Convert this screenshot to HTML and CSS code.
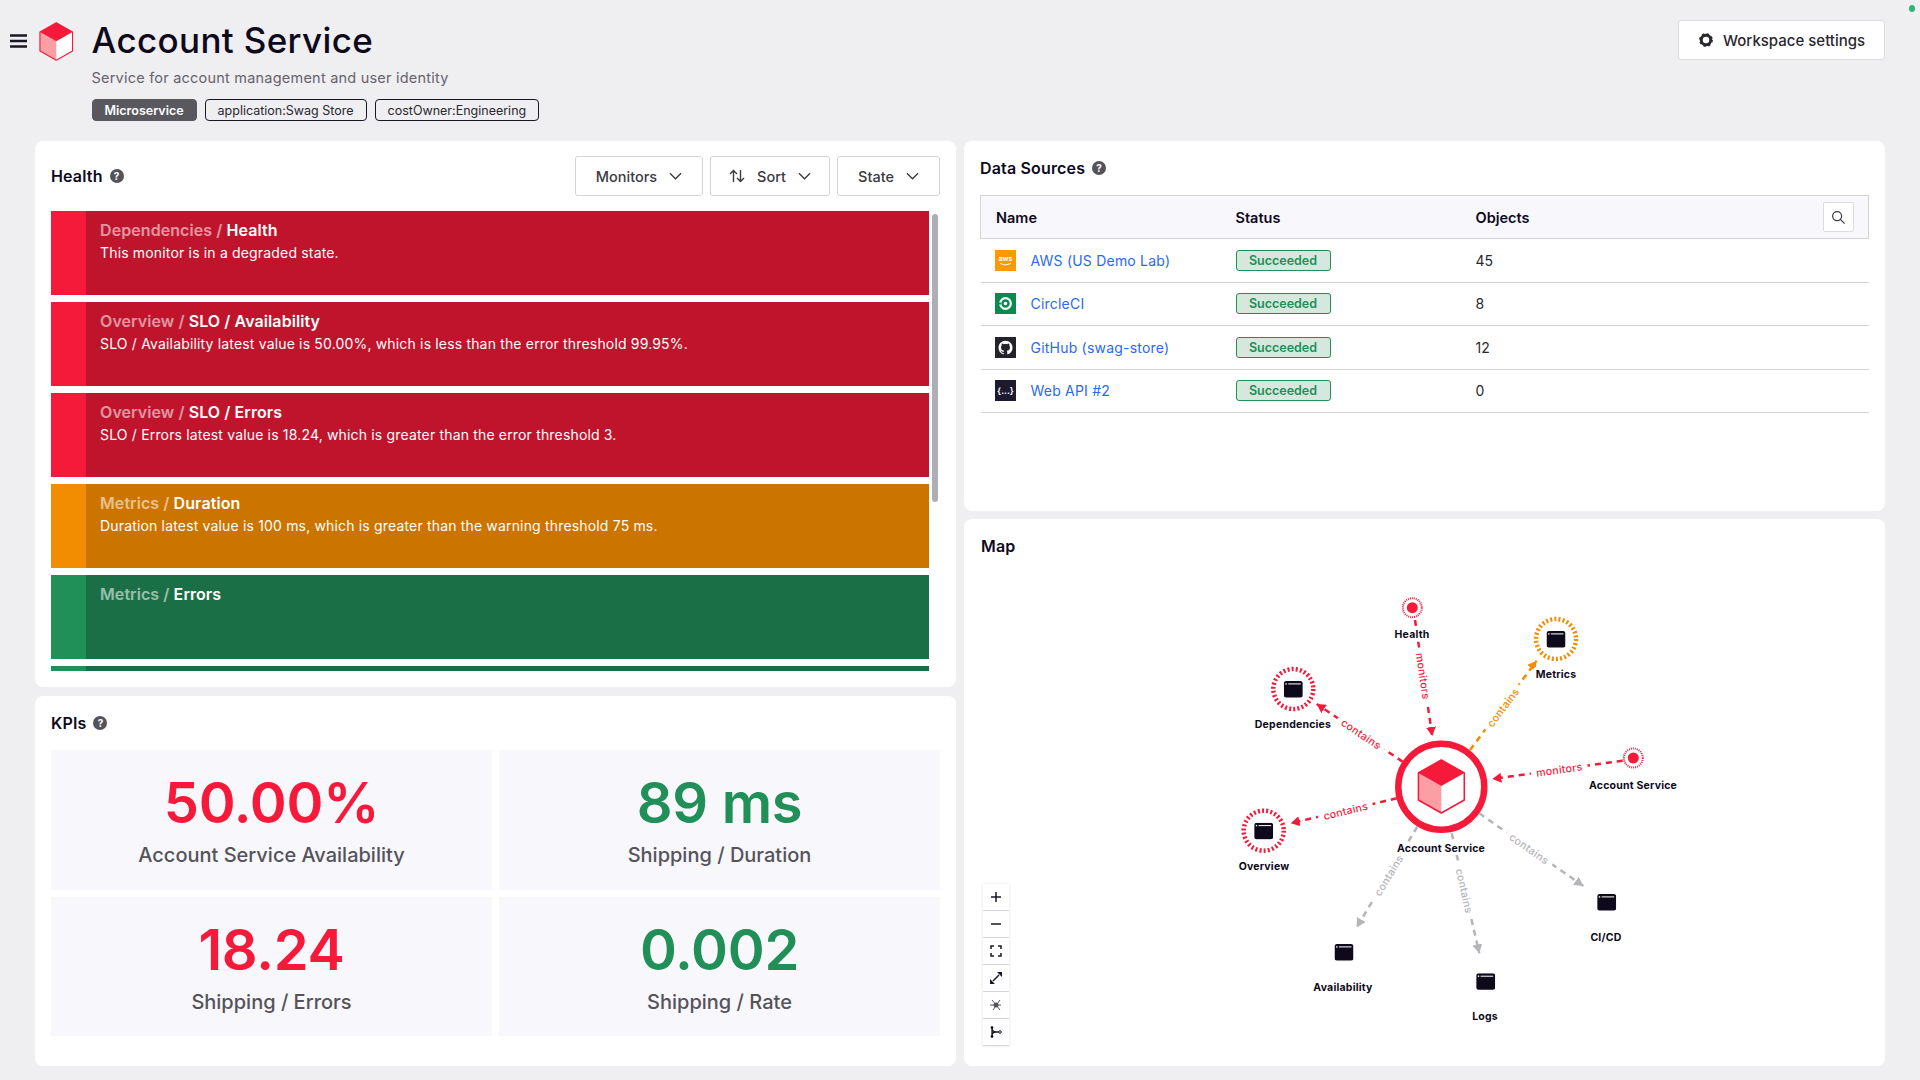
FILE: index.html
```html
<!DOCTYPE html>
<html lang="en">
<head>
<meta charset="utf-8">
<title>Account Service</title>
<link rel="stylesheet" href="styles.css">
</head>
<body>
<svg class="defs" width="0" height="0" aria-hidden="true">
  <defs>
    <symbol id="cube" viewBox="0 0 48 55">
      <polygon points="24,27 47,14 47,41 24,54" fill="#fff"/>
      <polygon points="24,27 1,14 1,41 24,54" fill="#fc9fa5"/>
      <polygon points="24,1 47,14 24,27 1,14" fill="#f61a3a"/>
      <polygon points="24,1 47,14 47,41 24,54 1,41 1,14" fill="none" stroke="#f61a3a" stroke-width="1.6" stroke-linejoin="round"/>
    </symbol>
    <symbol id="win" viewBox="0 0 19 17">
      <rect x="0" y="0" width="19" height="16.5" rx="2.5" fill="#0e0a1c"/>
      <rect x="1.6" y="2.2" width="1.4" height="1.4" fill="#fff"/>
      <rect x="4.4" y="2.4" width="12.6" height="1" fill="#fff"/>
    </symbol>
    <symbol id="chev" viewBox="0 0 14 8">
      <path d="M1 1l6 6 6-6" fill="none" stroke="#3c3a41" stroke-width="1.4"/>
    </symbol>
    <marker id="ar" markerUnits="userSpaceOnUse" markerWidth="10" markerHeight="10" refX="9" refY="5" orient="auto"><path d="M0 0L9 5L0 10z" fill="#f61a3a"/></marker>
    <marker id="ao" markerUnits="userSpaceOnUse" markerWidth="10" markerHeight="10" refX="9" refY="5" orient="auto"><path d="M0 0L9 5L0 10z" fill="#f28c00"/></marker>
    <marker id="ag" markerUnits="userSpaceOnUse" markerWidth="10" markerHeight="10" refX="9" refY="5" orient="auto"><path d="M0 0L9 5L0 10z" fill="#b5b4b9"/></marker>
  </defs>
</svg>

<div class="app">
  <header class="top">
    <svg class="burger" viewBox="0 0 17 14"><path d="M0 1.5h17M0 7h17M0 12.5h17" stroke="#1a1722" stroke-width="2.4"/></svg>
    <svg class="logo"><use href="#cube"/></svg>
    <div class="heading">
      <h1 class="title">Account Service</h1>
      <p class="subtitle">Service for account management and user identity</p>
      <div class="tags">
        <span class="tag tag-solid">Microservice</span>
        <span class="tag">application:Swag Store</span>
        <span class="tag">costOwner:Engineering</span>
      </div>
    </div>
    <button class="settings">
      <svg class="gear" viewBox="0 0 16 16"><circle cx="8" cy="8" r="5.4" fill="none" stroke="#2a2830" stroke-width="3.4"/><circle cx="8" cy="8" r="6.6" fill="none" stroke="#2a2830" stroke-width="2.6" stroke-dasharray="2.6 2.58"/></svg>
      Workspace settings
    </button>
    <i class="dot"></i>
  </header>

  <main class="columns">
    <div class="col">
      <section class="panel health">
        <div class="head head-tall">
          <h2 class="h">Health</h2><span class="help">?</span>
          <div class="filters">
            <button class="drop drop-mon">Monitors<svg class="chev"><use href="#chev"/></svg></button>
            <button class="drop drop-sort"><svg class="sort" viewBox="0 0 16 14"><path d="M4.5 13V1.5M1 5l3.5-3.5L8 5M11.5 1v11.500M8 9l3.500 3.500L15 9" fill="none" stroke="#3c3a41" stroke-width="1.4"/></svg>Sort<svg class="chev"><use href="#chev"/></svg></button>
            <button class="drop drop-state">State<svg class="chev"><use href="#chev"/></svg></button>
          </div>
        </div>
        <div class="monitor-wrap">
          <div class="monitors">
            <article class="mon red"><h3><span class="crumb">Dependencies / </span>Health</h3><p>This monitor is in a degraded state.</p></article>
            <article class="mon red"><h3><span class="crumb">Overview / </span>SLO / Availability</h3><p>SLO / Availability latest value is 50.00%, which is less than the error threshold 99.95%.</p></article>
            <article class="mon red"><h3><span class="crumb">Overview / </span>SLO / Errors</h3><p>SLO / Errors latest value is 18.24, which is greater than the error threshold 3.</p></article>
            <article class="mon orange"><h3><span class="crumb">Metrics / </span>Duration</h3><p>Duration latest value is 100 ms, which is greater than the warning threshold 75 ms.</p></article>
            <article class="mon green"><h3><span class="crumb">Metrics / </span>Errors</h3></article>
            <article class="mon green"></article>
          </div>
          <div class="thumb"></div>
        </div>
      </section>

      <section class="panel kpis">
        <div class="head"><h2 class="h">KPIs</h2><span class="help">?</span></div>
        <div class="kpi-grid">
          <div class="kpi"><b class="val bad">50.00%</b><span class="lab">Account Service Availability</span></div>
          <div class="kpi"><b class="val good">89 ms</b><span class="lab">Shipping / Duration</span></div>
          <div class="kpi"><b class="val bad">18.24</b><span class="lab">Shipping / Errors</span></div>
          <div class="kpi"><b class="val good">0.002</b><span class="lab">Shipping / Rate</span></div>
        </div>
      </section>
    </div>

    <div class="col col-right">
      <section class="panel sources">
        <div class="head"><h2 class="h">Data Sources</h2><span class="help">?</span></div>
        <table class="table">
          <thead>
            <tr><th>Name</th><th>Status</th><th>Objects</th>
              <th class="th-search"><button class="search"><svg viewBox="0 0 16 16"><circle cx="6.500" cy="6.500" r="4.800" fill="none" stroke="#3c3a41" stroke-width="1.300"/><path d="M10 10l4.500 4.500" stroke="#3c3a41" stroke-width="1.300"/></svg></button></th></tr>
          </thead>
          <tbody>
            <tr>
              <td><span class="src"><svg class="ico" viewBox="0 0 21 21"><rect width="21" height="21" fill="#ff9900"/><text class="aws" x="10.500" y="11">aws</text><path d="M5 13.500q5.500 3 11 0" fill="none" stroke="#fff" stroke-width="1"/></svg><a href="#">AWS (US Demo Lab)</a></span></td>
              <td><span class="badge">Succeeded</span></td><td>45</td><td></td>
            </tr>
            <tr>
              <td><span class="src"><svg class="ico" viewBox="0 0 21 21"><rect width="21" height="21" fill="#0a8a4e"/><circle cx="10.500" cy="10.500" r="5.300" fill="none" stroke="#fff" stroke-width="2.200"/><circle cx="10.500" cy="10.500" r="1.800" fill="#fff"/><rect x="2" y="9.500" width="4" height="2" fill="#0a8a4e"/></svg><a href="#">CircleCI</a></span></td>
              <td><span class="badge">Succeeded</span></td><td>8</td><td></td>
            </tr>
            <tr>
              <td><span class="src"><svg class="ico" viewBox="0 0 21 21"><rect width="21" height="21" fill="#24232b"/><g transform="translate(3.500 3.500) scale(.585)"><path fill="#fff" d="M12 .297c-6.630 0-12 5.373-12 12 0 5.303 3.438 9.800 8.205 11.385.6.113.820-.258.820-.577 0-.285-.010-1.040-.015-2.040-3.338.724-4.042-1.610-4.042-1.610C4.422 18.070 3.633 17.700 3.633 17.700c-1.087-.744.084-.729.084-.729 1.205.084 1.838 1.236 1.838 1.236 1.070 1.835 2.809 1.305 3.495.998.108-.776.417-1.305.760-1.605-2.665-.3-5.466-1.332-5.466-5.930 0-1.310.465-2.380 1.235-3.220-.135-.303-.54-1.523.105-3.176 0 0 1.005-.322 3.300 1.230.960-.267 1.980-.399 3-.405 1.020.006 2.040.138 3 .405 2.280-1.552 3.285-1.230 3.285-1.230.645 1.653.240 2.873.120 3.176.765.840 1.230 1.910 1.230 3.220 0 4.610-2.805 5.625-5.475 5.920.420.360.810 1.096.810 2.220 0 1.606-.015 2.896-.030 3.286 0 .315.210.690.825.570C20.565 22.092 24 17.592 24 12.297c0-6.627-5.373-12-12-12"/></g></svg><a href="#">GitHub (swag-store)</a></span></td>
              <td><span class="badge">Succeeded</span></td><td>12</td><td></td>
            </tr>
            <tr>
              <td><span class="src"><svg class="ico" viewBox="0 0 21 21"><rect width="21" height="21" fill="#1d1a30"/><text class="api" x="10.500" y="14">{...}</text></svg><a href="#">Web API #2</a></span></td>
              <td><span class="badge">Succeeded</span></td><td>0</td><td></td>
            </tr>
          </tbody>
        </table>
      </section>

      <section class="panel map">
        <div class="head"><h2 class="h">Map</h2></div>
        <svg class="canvas" viewBox="964 573 921 493">
          <line class="e e-r" x1="1415" y1="620" x2="1432.300" y2="736" marker-end="url(#ar)"/>
          <line class="e e-o" x1="1470" y1="750" x2="1536.700" y2="660.700" marker-end="url(#ao)"/>
          <line class="e e-r" x1="1402.700" y1="761.700" x2="1316.700" y2="704" marker-end="url(#ar)"/>
          <line class="e e-r" x1="1622.700" y1="760.700" x2="1492.300" y2="779" marker-end="url(#ar)"/>
          <line class="e e-r" x1="1396.700" y1="798.300" x2="1290.700" y2="823.300" marker-end="url(#ar)"/>
          <line class="e e-g" x1="1479.300" y1="813.300" x2="1583.300" y2="886" marker-end="url(#ag)"/>
          <line class="e e-g" x1="1417.300" y1="826.700" x2="1356.700" y2="927.300" marker-end="url(#ag)"/>
          <line class="e e-g" x1="1451.700" y1="833.300" x2="1479.300" y2="953.300" marker-end="url(#ag)"/>

          <text class="el el-r" transform="translate(1422.700 676) rotate(81.500)">monitors</text>
          <text class="el el-o" transform="translate(1503.300 707.700) rotate(-53)">contains</text>
          <text class="el el-r" transform="translate(1361 734.300) rotate(34)">contains</text>
          <text class="el el-r" transform="translate(1559.300 770) rotate(-8)">monitors</text>
          <text class="el el-r" transform="translate(1345.700 811.300) rotate(-13.300)">contains</text>
          <text class="el el-g" transform="translate(1529 849) rotate(35)">contains</text>
          <text class="el el-g" transform="translate(1389 875.700) rotate(-59)">contains</text>
          <text class="el el-g" transform="translate(1464 891) rotate(77)">contains</text>

          <circle class="hub" cx="1441.300" cy="786.700" r="43"/>
          <use href="#cube" x="1417.300" y="759" width="48" height="55"/>

          <circle class="ring-s" cx="1412.300" cy="607.700" r="9.500"/><circle class="core" cx="1412.300" cy="607.700" r="5.500"/>
          <circle class="ring-s" cx="1633.300" cy="758" r="9.500"/><circle class="core" cx="1633.300" cy="758" r="5.500"/>
          <circle class="ring ring-o" cx="1556" cy="639" r="20"/>
          <circle class="ring ring-r" cx="1293.300" cy="689" r="20"/>
          <circle class="ring ring-r" cx="1263.700" cy="830.700" r="20"/>
          <use href="#win" x="1546.500" y="631" width="19" height="17"/>
          <use href="#win" x="1283.800" y="681" width="19" height="17"/>
          <use href="#win" x="1254.200" y="822.700" width="19" height="17"/>
          <use href="#win" x="1597.200" y="894" width="19" height="17"/>
          <use href="#win" x="1334.500" y="944" width="19" height="17"/>
          <use href="#win" x="1476.200" y="973.300" width="19" height="17"/>

          <text class="nl" x="1412" y="638">Health</text>
          <text class="nl" x="1556" y="678">Metrics</text>
          <text class="nl" x="1293" y="728">Dependencies</text>
          <text class="nl" x="1633" y="789">Account Service</text>
          <text class="nl" x="1441" y="852">Account Service</text>
          <text class="nl" x="1264" y="870">Overview</text>
          <text class="nl" x="1606" y="941">CI/CD</text>
          <text class="nl" x="1343" y="991">Availability</text>
          <text class="nl" x="1485" y="1020">Logs</text>
        </svg>
        <div class="ctrls">
          <button class="ctrl"><svg viewBox="0 0 12 12"><path d="M6 1v10M1 6h10" stroke="#1a1722" stroke-width="1.500"/></svg></button>
          <button class="ctrl"><svg viewBox="0 0 12 12"><path d="M1 6h10" stroke="#1a1722" stroke-width="1.500"/></svg></button>
          <button class="ctrl"><svg viewBox="0 0 12 12"><path d="M1 4V1h3M8 1h3v3M11 8v3H8M4 11H1V8" fill="none" stroke="#1a1722" stroke-width="1.500"/></svg></button>
          <button class="ctrl"><svg viewBox="0 0 12 12"><path d="M7 0h5v5zM0 7v5h5z" fill="#1a1722"/><path d="M9 3L3 9" stroke="#1a1722" stroke-width="1.500"/></svg></button>
          <button class="ctrl"><svg viewBox="0 0 12 12"><path d="M0 6h11M2 1l8 10M10 1L3 11" stroke="#55535a" stroke-width="1"/><circle cx="6" cy="6" r="2.500" fill="#55535a"/></svg></button>
          <button class="ctrl"><svg viewBox="0 0 12 12"><path d="M2 1.500v9M2 3q1 3 4 3h3M2 9q.500-3 4-3" fill="none" stroke="#1a1722" stroke-width="1.300"/><circle cx="2" cy="1.500" r="1.300"/><circle cx="2" cy="10.500" r="1.300"/><circle cx="10" cy="6" r="1.300" fill="#fff" stroke="#1a1722"/></svg></button>
        </div>
      </section>
    </div>
  </main>
</div>
</body>
</html>
```

FILE: styles.css
```css
* { box-sizing: border-box; }
html, body { margin: 0; padding: 0; }
body {
  width: 1920px;
  height: 1080px;
  overflow: hidden;
  background: #efeef1;
  color: #0e0a1c;
  font-family: Inter, "Liberation Sans", sans-serif;
}
.defs { position: absolute; }
button { font: inherit; cursor: pointer; }

.top { display: flex; align-items: flex-start; height: 141px; padding-left: 10px; position: relative; }
.burger { width: 17px; height: 14px; margin-top: 34px; flex: none; }
.logo { width: 34.500px; height: 39px; margin: 22px 0 0 12px; flex: none; }
.heading { margin-left: 18px; }
.title { margin: 18px 0 0; font-size: 35px; line-height: 44px; font-weight: 500; letter-spacing: .01em; color: #0e0a1c; }
.subtitle { margin: 7px 0 0; font-size: 14.500px; line-height: 18px; color: #66646b; letter-spacing: .015em; }
.tags { display: flex; gap: 8px; margin-top: 12px; }
.tag { display: flex; align-items: center; justify-content: center; height: 22px; padding: 0 12px; border: 1px solid #1a1722; border-radius: 4px; font-size: 12.500px; color: #2a2830; background: transparent; }
.tag-solid { background: #5a585f; border-color: #5a585f; color: #fff; font-weight: 600; }
.settings { margin: 20px 35px 0 auto; width: 207px; height: 40px; display: flex; align-items: center; gap: 10px; padding: 0 0 0 20px; background: #fff; border: 1px solid #dcdbdf; border-radius: 3px; font-size: 15px; font-weight: 500; color: #2a2830; white-space: nowrap; }
.gear { width: 14px; height: 14px; flex: none; }
.dot { position: absolute; left: 1909px; top: 5px; width: 6px; height: 7px; border-radius: 50%; background: #2bb673; }

.columns { display: flex; gap: 8px; padding-left: 35px; }
.col { width: 921px; display: flex; flex-direction: column; gap: 9px; }
.col-right { gap: 8px; }
.panel { background: #fff; border-radius: 8px; padding: 0 16px; }
.health { height: 546px; }
.kpis { height: 370px; }
.sources { height: 370px; }
.map { height: 547px; position: relative; padding: 0; }
.map .head { padding-left: 17px; }

.head { display: flex; align-items: center; height: 54px; gap: 7px; }
.head-tall { height: 70px; }
.h { margin: 0; font-size: 16px; font-weight: 600; color: #0e0a1c; letter-spacing: .01em; }
.help { width: 14px; height: 14px; border-radius: 50%; background: #55535a; color: #fff; font-size: 10px; font-weight: 700; display: flex; align-items: center; justify-content: center; }
.filters { margin-left: auto; display: flex; gap: 7px; }
.drop { height: 40px; display: flex; align-items: center; justify-content: center; gap: 12px; padding: 0; background: #fff; border: 1px solid #d5d4d8; border-radius: 3px; font-size: 14.500px; font-weight: 500; color: #3c3a41; }
.drop-mon { width: 128px; }
.drop-sort { width: 120px; }
.drop-state { width: 103px; }
.chev { width: 13px; height: 8px; flex: none; }
.sort { width: 16px; height: 14px; flex: none; }

.monitor-wrap { display: flex; gap: 3px; height: 460px; overflow: hidden; }
.monitors { width: 878px; display: flex; flex-direction: column; gap: 7px; flex: none; }
.mon { height: 84px; flex: none; border-left: 35px solid; padding: 9px 14px; color: #fff; }
.mon h3 { margin: 0; font-size: 16px; line-height: 20px; font-weight: 600; letter-spacing: .005em; }
.mon p { margin: 3px 0 0; font-size: 14px; line-height: 20px; letter-spacing: .012em; }
.crumb { opacity: .55; }
.red { background: #bf142c; border-color: #f61a3a; }
.orange { background: #cc7400; border-color: #f28c00; }
.green { background: #1b6f46; border-color: #208f58; }
.thumb { width: 6px; height: 288px; margin-top: 3px; border-radius: 3px; background: #b0aeb5; flex: none; }

.kpi-grid { display: grid; grid-template-columns: 441px 441px; grid-template-rows: 140px 139px; gap: 7px; }
.kpi { background: #f8f7fc; display: flex; flex-direction: column; align-items: center; padding-top: 18px; }
.val { font-size: 56px; line-height: 70px; font-weight: 600; letter-spacing: -.005em; }
.bad { color: #f61a3a; }
.good { color: #208f58; }
.lab { margin-top: 3px; font-size: 20px; line-height: 28px; font-weight: 500; color: #55535a; }

.table { width: 889px; border-collapse: collapse; table-layout: fixed; font-size: 14px; color: #2a2830; }
.table th { height: 43px; background: #f8f7fc; text-align: left; font-size: 14.500px; font-weight: 600; padding: 0 0 0 15px; color: #0e0a1c; border-top: 1px solid #d5d4d8; border-bottom: 1px solid #d5d4d8; }
.table th:first-child { border-left: 1px solid #d5d4d8; }
.table th:last-child { border-right: 1px solid #d5d4d8; }
.table th:nth-child(-n+3) { width: 240px; }
.table td { height: 43.500px; padding: 0 0 0 15px; border-bottom: 1px solid #d5d4d8; }
.th-search { text-align: right !important; padding-right: 14px !important; }
.search { width: 31px; height: 30px; padding: 0; background: #fff; border: 1px solid #dcdbdf; border-radius: 2px; display: inline-flex; align-items: center; justify-content: center; vertical-align: middle; }
.search svg { width: 15px; height: 15px; }
.src { display: flex; align-items: center; gap: 15px; margin-left: -1px; }
.ico { width: 21px; height: 21px; flex: none; }
.src a { color: #2a6aef; text-decoration: none; letter-spacing: .015em; white-space: nowrap; }
.badge { display: flex; align-items: center; justify-content: center; width: 95px; height: 21px; border: 1px solid #208f58; border-radius: 3px; background: #d6e8de; color: #208f58; font-size: 12.500px; font-weight: 600; }
.aws { font-size: 7px; font-weight: 700; fill: #fff; text-anchor: middle; }
.api { font-size: 9px; font-weight: 600; fill: #fff; text-anchor: middle; }

.canvas { display: block; width: 921px; height: 493px; }
.e { stroke-width: 2.500; stroke-dasharray: 6 5; fill: none; }
.e-r { stroke: #f61a3a; }
.e-o { stroke: #f28c00; }
.e-g { stroke: #b5b4b9; }
.el { font-size: 10.500px; font-weight: 500; text-anchor: middle; dominant-baseline: central; letter-spacing: .03em; paint-order: stroke; stroke: #fff; stroke-width: 12px; stroke-linejoin: round; }
.el-r { fill: #f61a3a; }
.el-o { fill: #f28c00; }
.el-g { fill: #b5b4b9; }
.hub { fill: #fff; stroke: #f61a3a; stroke-width: 6.500; }
.core { fill: #f61a3a; }
.ring-s { fill: #fff; stroke: #f61a3a; stroke-width: 2; stroke-dasharray: 1 1; }
.ring { fill: #fff; stroke-width: 4.500; stroke-dasharray: 2 2.180; }
.ring-r { stroke: #f61a3a; }
.ring-o { stroke: #f28c00; }
.nl { font-size: 10.500px; font-weight: 700; text-anchor: middle; fill: #0e0a1c; letter-spacing: .02em; paint-order: stroke; stroke: #fff; stroke-width: 6px; stroke-linejoin: round; }

.ctrls { position: absolute; left: 19px; bottom: 20px; width: 26px; display: flex; flex-direction: column; box-shadow: 0 0 3px rgba(0,0,0,.12); }
.ctrl { width: 26px; height: 27px; padding: 0; background: #fff; border: 0; border-bottom: 1px solid #d5d4d8; display: flex; align-items: center; justify-content: center; }
.ctrl svg { width: 12px; height: 12px; }
```
